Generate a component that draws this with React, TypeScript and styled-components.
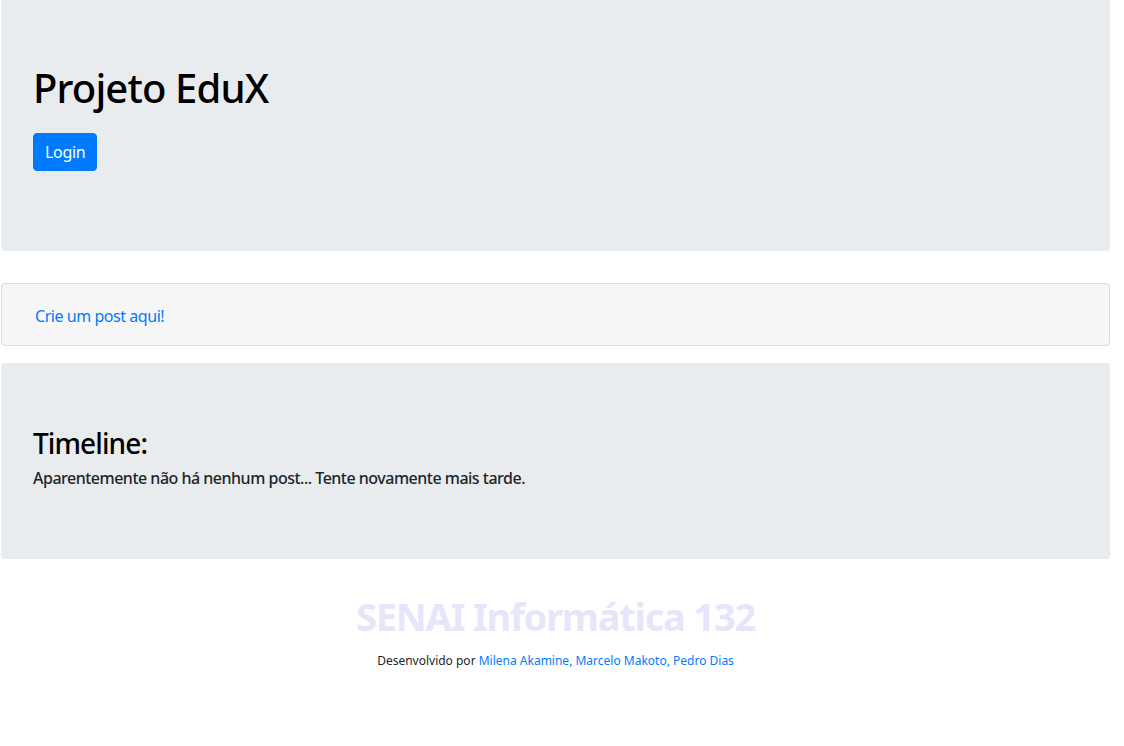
import React from "react";
import styled, { createGlobalStyle } from "styled-components";

const Global = createGlobalStyle`
  html, body { margin: 0; padding: 0; background: #fff; }
  body {
    font-family: "Noto Sans", "Open Sans", Arial, sans-serif;
    color: #212529;
    font-size: 16px;
    line-height: 1.5;
  }
  * { box-sizing: border-box; }
`;

const Page = styled.div`
  width: 1110px;
  padding-left: 1px;
  display: flex;
  flex-direction: column;
`;

const Jumbotron = styled.section<{ $top?: boolean }>`
  background: #e9ecef;
  padding: 64px 32px;
  border-radius: ${(p) => (p.$top ? "0 0 4px 4px" : "4px")};
  margin-bottom: 32px;
`;

const Title = styled.h1`
  margin: 0 0 21px;
  font-size: 40px;
  font-weight: 500;
  line-height: 48px;
  letter-spacing: -0.85px;
  color: #000;
`;

const ButtonRow = styled.p`
  margin: 0 0 16px;
`;

const LoginButton = styled.button`
  font-family: inherit;
  background: #007bff;
  color: #fff;
  border: 1px solid #007bff;
  border-radius: 4px;
  font-size: 16px;
  line-height: 24px;
  letter-spacing: -0.3px;
  padding: 6px 11px;
  height: 38px;
  cursor: pointer;
`;

const PostCard = styled.div`
  background: #f6f6f6;
  border: 1px solid #dcdcdc;
  border-radius: 4px;
  padding: 20px 33px 17px;
  margin-bottom: 17px;
`;

const Link = styled.a<{ $tight?: boolean }>`
  color: #007bff;
  text-decoration: none;
  letter-spacing: ${(p) => (p.$tight ? "-0.45px" : "normal")};
`;

const Timeline = styled(Jumbotron)`
  padding-bottom: 69px;
`;

const SectionTitle = styled.h3`
  margin: 0 0 5px;
  font-size: 28px;
  font-weight: 500;
  line-height: 33.6px;
  letter-spacing: -0.9px;
  color: #000;
`;

const Empty = styled.p`
  margin: 0;
  font-weight: 500;
  font-size: 16px;
  letter-spacing: -0.5px;
`;

const Footer = styled.footer`
  text-align: center;
  margin-top: 2px;
`;

const Brand = styled.h1`
  margin: 0 0 13px;
  font-size: 38px;
  font-weight: 700;
  line-height: 46px;
  letter-spacing: -1.2px;
  color: #e6e6fa;
`;

const Credits = styled.p`
  margin: 0;
  font-size: 12px;
  color: #212529;
`;

export default function App() {
  return (
    <Page>
      <Global />
      <Jumbotron $top>
        <Title>Projeto EduX</Title>
        <ButtonRow>
          <LoginButton>Login</LoginButton>
        </ButtonRow>
      </Jumbotron>
      <PostCard>
        <Link href="#" $tight>Crie um post aqui!</Link>
      </PostCard>
      <Timeline>
        <SectionTitle>Timeline:</SectionTitle>
        <Empty>Aparentemente não há nenhum post... Tente novamente mais tarde.</Empty>
      </Timeline>
      <Footer>
        <Brand>SENAI Informática 132</Brand>
        <Credits>
          Desenvolvido por <Link href="#">Milena Akamine, Marcelo Makoto, Pedro Dias</Link>
        </Credits>
      </Footer>
    </Page>
  );
}
